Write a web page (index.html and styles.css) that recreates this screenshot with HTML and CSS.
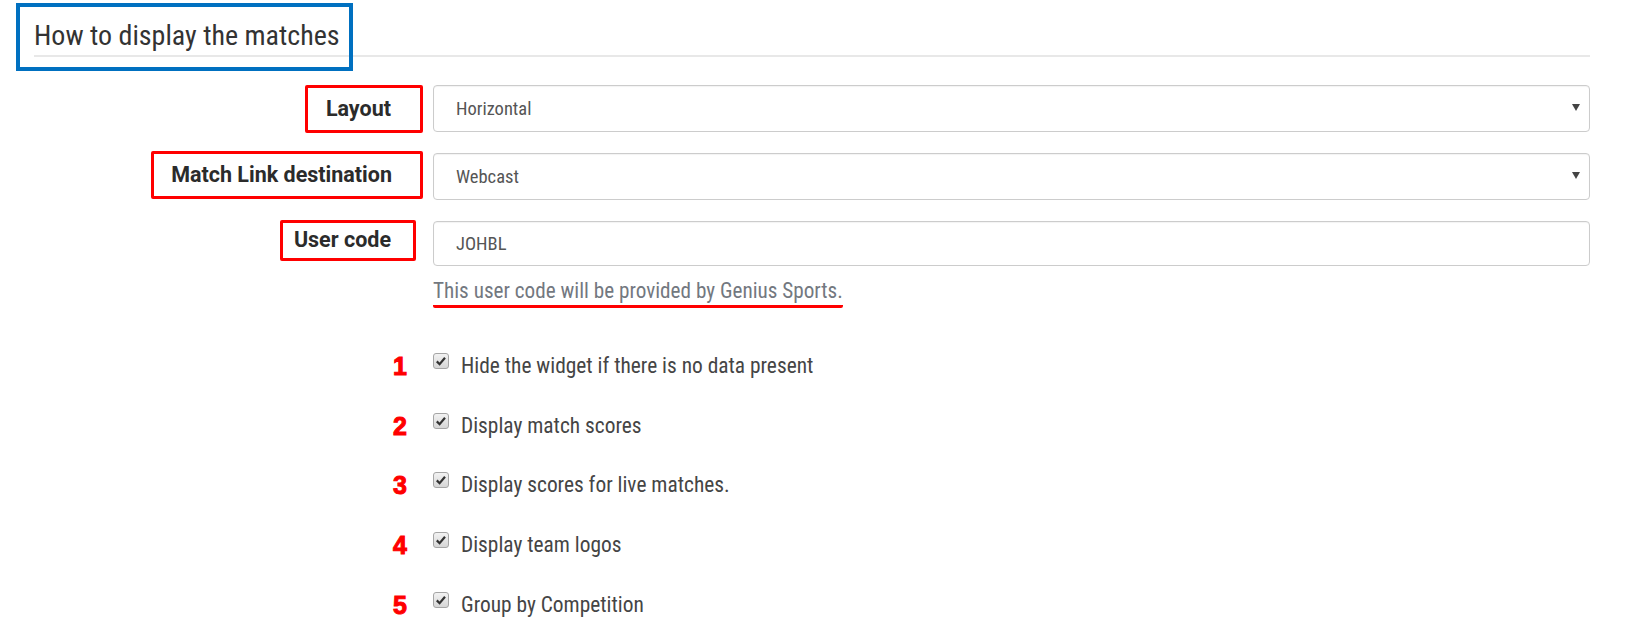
FILE: index.html
```html
<!DOCTYPE html>
<html>
<head>
<meta charset="utf-8"/>
<title>How to display the matches</title>
<link rel="stylesheet" href="styles.css">
</head>
<body>

<div class="page">
	<div class="section-head">
		<h2 class="section-title">How to display the matches</h2>
		<span class="callout-blue"></span>
	</div>

	<form class="form">
		<div class="form-row">
			<div class="form-label"><label class="mark mark-layout" for="layout">Layout</label></div>
			<div class="select-wrap">
				<select id="layout"><option>Horizontal</option></select>
			</div>
		</div>
		<div class="form-row">
			<div class="form-label"><label class="mark mark-link" for="link">Match Link destination</label></div>
			<div class="select-wrap">
				<select id="link"><option>Webcast</option></select>
			</div>
		</div>
		<div class="form-row row-code">
			<div class="form-label"><label class="mark mark-code" for="code">User code</label></div>
			<div>
				<input id="code" class="text-input" type="text" value="JOHBL">
				<p class="help"><span class="underline">This user code will be provided by Genius Sports.</span></p>
			</div>
		</div>

		<ul class="options">
			<li><span class="num">1</span><span class="check"><svg viewBox="0 0 16 16" width="16" height="16"><path d="M3.8 8.4 L6.6 11.2 L12 4.8"/></svg></span><span class="opt-text">Hide the widget if there is no data present</span></li>
			<li><span class="num">2</span><span class="check"><svg viewBox="0 0 16 16" width="16" height="16"><path d="M3.8 8.4 L6.6 11.2 L12 4.8"/></svg></span><span class="opt-text">Display match scores</span></li>
			<li><span class="num">3</span><span class="check"><svg viewBox="0 0 16 16" width="16" height="16"><path d="M3.8 8.4 L6.6 11.2 L12 4.8"/></svg></span><span class="opt-text">Display scores for live matches.</span></li>
			<li><span class="num">4</span><span class="check"><svg viewBox="0 0 16 16" width="16" height="16"><path d="M3.8 8.4 L6.6 11.2 L12 4.8"/></svg></span><span class="opt-text">Display team logos</span></li>
			<li><span class="num">5</span><span class="check"><svg viewBox="0 0 16 16" width="16" height="16"><path d="M3.8 8.4 L6.6 11.2 L12 4.8"/></svg></span><span class="opt-text">Group by Competition</span></li>
		</ul>
	</form>
</div>

</body>
</html>
```

FILE: styles.css
```css
body {
	margin: 0;
	background: #fff;
	font-family: "Roboto Condensed", Roboto, "Liberation Sans", sans-serif;
	color: #333;
}
.page {
	padding: 19px 60px 0 34px;
}
/* heading */
.section-head {
	position: relative;
}
.section-title {
	margin: 0;
	font-size: 28px;
	font-weight: normal;
	line-height: 34px;
	color: #333;
	padding-bottom: 2px;
	border-bottom: 2px solid #e8e8e8;
}
.callout-blue {
	position: absolute;
	left: -18px;
	top: -16px;
	width: 329px;
	height: 60px;
	border: 4px solid #0070c0;
}
/* form rows */
.form {
	margin-top: 28px;
}
.form-row {
	display: grid;
	grid-template-columns: 399px 1fr;
	margin-bottom: 21px;
}
.form-label {
	display: flex;
	justify-content: flex-end;
	align-items: center;
	padding-right: 10px;
	height: 47px;
}
.mark {
	font-family: Roboto, "Liberation Sans", sans-serif;
	font-weight: bold;
	font-size: 21.5px;
	line-height: 30px;
	color: #2b2b2b;
	border: 3px solid #f00;
	border-radius: 2px;
}
.mark-layout {
	padding: 6px 29px 6px 18px;
}
.mark-link {
	padding: 6px 28px 6px 17px;
	margin-bottom: 3px;
}
.mark-code {
	padding: 2px 22px 3px 11px;
	margin-right: 7px;
	margin-bottom: 8px;
}
.select-wrap {
	position: relative;
}
.select-wrap select {
	appearance: none;
	-webkit-appearance: none;
	display: block;
	width: 100%;
	height: 47px;
	border: 1px solid #ccc;
	border-radius: 4px;
	background: #fff;
	box-shadow: inset 0 1px 1px rgba(0,0,0,.05);
	padding: 0 22px;
	font-family: inherit;
	font-size: 18.5px;
	color: #555;
}
.select-wrap::after {
	content: "";
	position: absolute;
	right: 10px;
	top: 19px;
	border-left: 4px solid transparent;
	border-right: 4px solid transparent;
	border-top: 7px solid #444;
}
.row-code {
	margin-top: 1px;
}
.text-input {
	display: block;
	box-sizing: border-box;
	width: 100%;
	height: 45px;
	border: 1px solid #ccc;
	border-radius: 4px;
	box-shadow: inset 0 1px 1px rgba(0,0,0,.05);
	padding: 0 22px;
	font-family: inherit;
	font-size: 18.5px;
	color: #555;
}
.help {
	margin: 10px 0 0;
	font-size: 21.2px;
	line-height: 30px;
	color: #737880;
}
.underline {
	padding-bottom: 2px;
	border-bottom: 3px solid #f00;
	border-radius: 2px;
}
/* checkbox options */
.options {
	list-style: none;
	margin: 45px 0 0;
	padding: 0;
}
.options li {
	display: grid;
	grid-template-columns: 399px 16px 1fr;
	align-items: start;
	height: 30px;
	margin-bottom: 29.7px;
}
.num {
	text-align: right;
	padding-right: 26px;
	font-family: "Liberation Sans", Arial, sans-serif;
	font-weight: bold;
	font-size: 25px;
	line-height: 30px;
	color: #f00;
	-webkit-text-stroke: 1px #f00;
}
.check {
	margin-top: 2px;
	width: 16px;
	height: 16px;
	box-sizing: border-box;
	border: 1px solid #a5a5a5;
	border-radius: 3px;
	background: linear-gradient(#f2f2f2, #d6d6d6);
}
.check svg {
	display: block;
	margin: -1px;
}
.check path {
	fill: none;
	stroke: #333;
	stroke-width: 2.2;
}
.opt-text {
	margin-left: 12px;
	font-size: 21.4px;
	line-height: 30px;
	color: #454545;
}
```
